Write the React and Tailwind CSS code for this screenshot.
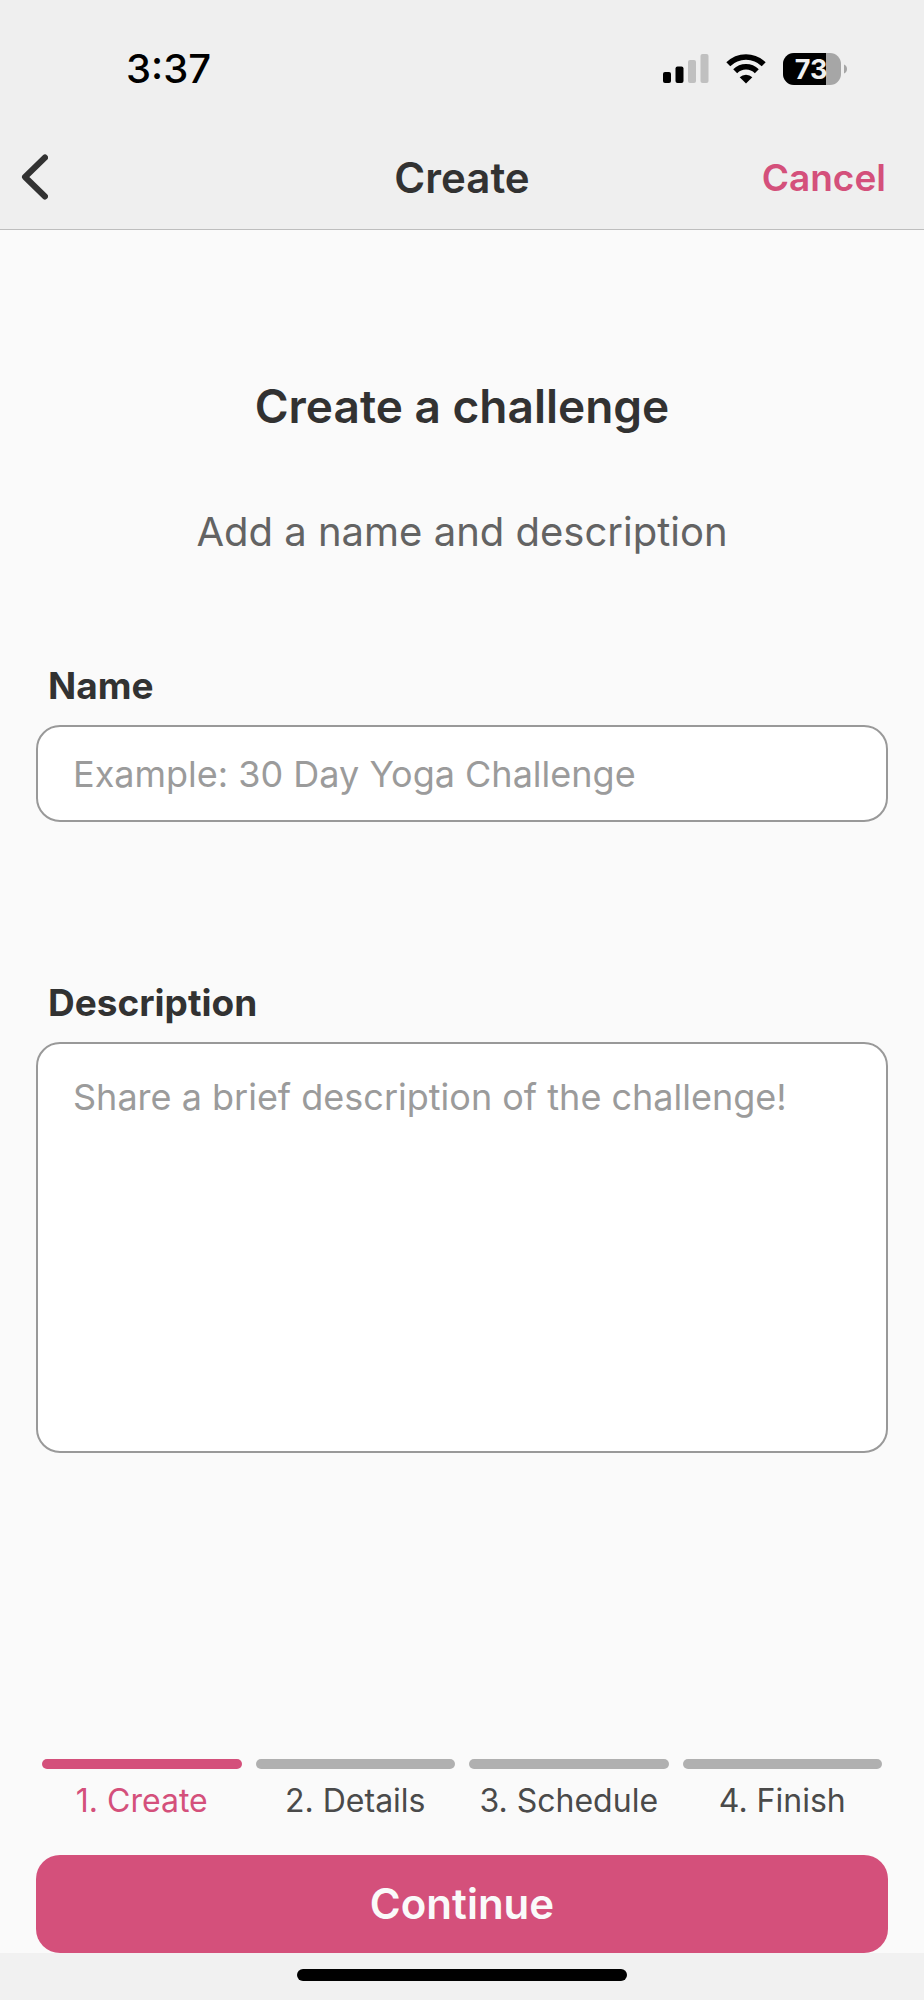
import { useState } from "react";

const STEPS = ["Create", "Details", "Schedule", "Finish"];

const StatusBar = () => (
  <div className="flex h-[138px] items-center justify-between pl-[126px] pr-[77px] text-black">
    <span className="text-[40px] leading-[48px] font-medium">3:37</span>
    <div className="flex items-center gap-[17px]">
      {/* Signal strength */}
      <svg width="46" height="30" viewBox="0 0 46 30" aria-hidden="true">
        <rect x="0" y="18" width="8" height="11" rx="2" fill="#000" />
        <rect x="12.5" y="12.5" width="8" height="16.5" rx="2" fill="#000" />
        <rect x="25" y="6" width="8" height="23" rx="2" fill="#c0c0c0" />
        <rect x="37.5" y="0" width="8" height="29" rx="2" fill="#c0c0c0" />
      </svg>
      {/* Wifi */}
      <svg width="40" height="30" viewBox="0 0 40 30" aria-hidden="true">
        <path
          d="M2.3 10.3A25 25 0 0 1 37.7 10.3M9.2 17.2A15.3 15.3 0 0 1 30.8 17.2"
          fill="none"
          stroke="#000"
          strokeWidth="5.6"
        />
        <path d="M20 29.5L13.7 23.2A9 9 0 0 1 26.3 23.2Z" fill="#000" />
      </svg>
      {/* Battery */}
      <svg width="64" height="32" viewBox="0 0 64 32" aria-hidden="true">
        <defs>
          <clipPath id="battery-body">
            <rect x="0" y="0" width="58" height="32" rx="11" />
          </clipPath>
        </defs>
        <g clipPath="url(#battery-body)">
          <rect width="58" height="32" fill="#a6a6a6" />
          <rect width="43" height="32" fill="#000" />
        </g>
        <path d="M61 11.5C65 13 65 19 61 20.5Z" fill="#a6a6a6" />
        <text
          x="28"
          y="26"
          textAnchor="middle"
          fontSize="27"
          fontWeight="700"
          fill="#f0f0f0"
        >
          73
        </text>
      </svg>
    </div>
  </div>
);

const Header = () => (
  <header className="border-b border-[#bebebe] bg-[#efefef]">
    <StatusBar />
    <div className="grid h-[91px] grid-cols-3 items-start px-5 pt-[14px]">
      <button type="button" aria-label="Back" className="justify-self-start pt-[2px]">
        <svg width="28" height="46" viewBox="0 0 28 46" aria-hidden="true">
          <path
            d="M25 3.5L5 23L25 42.5"
            fill="none"
            stroke="#323232"
            strokeWidth="6"
            strokeLinecap="round"
            strokeLinejoin="round"
          />
        </svg>
      </button>
      <h1 className="text-center text-[42px] leading-[52px] font-semibold">
        Create
      </h1>
      <button
        type="button"
        className="justify-self-end pr-[18px] text-[37px] leading-[52px] font-semibold text-[#d4507b]"
      >
        Cancel
      </button>
    </div>
  </header>
);

const StepProgress = ({ current }) => (
  <ol className="flex gap-[14px] px-[6px]">
    {STEPS.map((step, index) => (
      <li
        key={step}
        aria-current={index === current ? "step" : undefined}
        className="flex-1"
      >
        <div
          className={`h-[10px] rounded-full ${
            index === current ? "bg-[#d4507b]" : "bg-[#b0b0b0]"
          }`}
        />
        <p
          className={`mt-3 text-center text-[32px] leading-10 whitespace-nowrap ${
            index === current ? "text-[#d4507b]" : "text-[#4a4a4a]"
          }`}
        >
          {index + 1}. {step}
        </p>
      </li>
    ))}
  </ol>
);

const App = () => {
  const [name, setName] = useState("");
  const [description, setDescription] = useState("");

  const handleSubmit = (e) => {
    e.preventDefault();
  };

  return (
    <div className="flex min-h-screen flex-col bg-[#fafafa] font-['Inter',sans-serif] text-[#323232]">
      <Header />

      <form
        onSubmit={handleSubmit}
        className="flex flex-1 flex-col px-9 pt-[148px]"
      >
        <h2 className="text-center text-[46px] leading-[56px] font-semibold">
          Create a challenge
        </h2>
        <p className="mt-[72px] text-center text-[40px] leading-[52px] text-[#636363]">
          Add a name and description
        </p>

        <label
          htmlFor="name"
          className="mt-[102px] pl-3 text-[37px] leading-[52px] font-bold"
        >
          Name
        </label>
        <input
          id="name"
          type="text"
          value={name}
          onChange={(e) => setName(e.target.value)}
          placeholder="Example: 30 Day Yoga Challenge"
          className="mt-[13px] h-[97px] rounded-3xl border-2 border-[#999999] bg-white px-[35px] text-[36px] leading-[52px] outline-none placeholder:text-[#9b9b9b]"
        />

        <label
          htmlFor="description"
          className="mt-[155px] pl-3 text-[37px] leading-[52px] font-bold"
        >
          Description
        </label>
        <textarea
          id="description"
          value={description}
          onChange={(e) => setDescription(e.target.value)}
          placeholder="Share a brief description of the challenge!"
          className="mt-[13px] h-[411px] resize-none rounded-3xl border-2 border-[#999999] bg-white px-[35px] py-[27px] text-[36px] leading-[52px] outline-none placeholder:text-[#9b9b9b]"
        />

        <div className="mt-auto">
          <StepProgress current={0} />
          <button
            type="submit"
            className="mt-[34px] h-[98px] w-full rounded-3xl bg-[#d4507b] text-[42px] leading-[52px] font-semibold text-[#fafafa]"
          >
            Continue
          </button>
        </div>
      </form>

      <footer className="flex h-[47px] items-start justify-center bg-[#f1f1f1] pt-4">
        <div className="h-3 w-[330px] rounded-full bg-black" />
      </footer>
    </div>
  );
};

export default App;
